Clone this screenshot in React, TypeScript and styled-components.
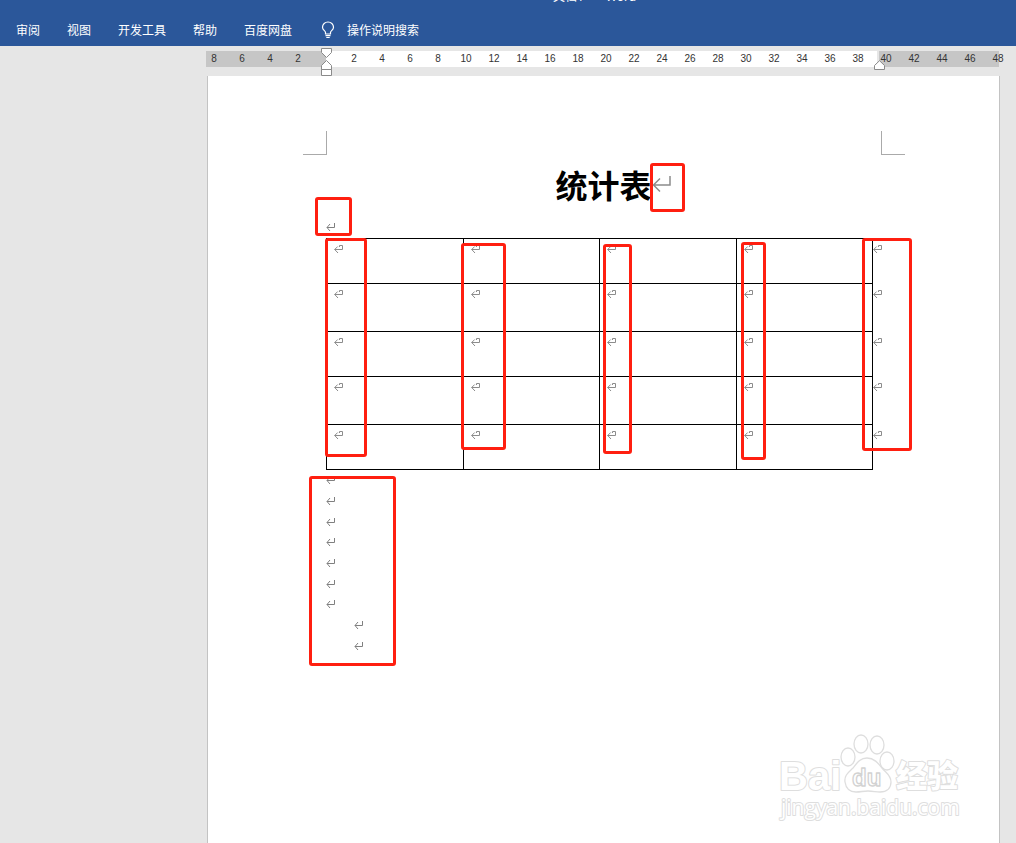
import React from "react";
import styled, { createGlobalStyle } from "styled-components";

const GlobalStyle = createGlobalStyle`
  * { box-sizing: border-box; }
  body {
    margin: 0;
    background: #e6e6e6;
    font-family: "Noto Sans", "Noto Sans CJK SC", sans-serif;
  }
  button { font: inherit; color: inherit; background: none; border: 0; padding: 0; cursor: pointer; }
`;

const Window = styled.div`
  min-height: 100vh;
  display: flex;
  flex-direction: column;
`;

const Header = styled.header`
  height: 46px;
  background: #2b579a;
  color: #fff;
  overflow: hidden;
  font-size: 12px;
  line-height: 18px;
`;

const TitleBar = styled.div`
  display: flex;
  gap: 9px;
  margin-top: -12px;
  padding-left: 553px;
  white-space: nowrap;
`;

const Tabs = styled.nav`
  display: flex;
  align-items: center;
  gap: 27px;
  height: 18px;
  margin-top: 15px;
  padding-left: 16px;
  white-space: nowrap;
  font-family: "Noto Sans CJK SC", sans-serif;
`;

const TellMe = styled.button`
  display: flex;
  align-items: center;
  gap: 12px;
  padding-left: 2px;
`;

const Workspace = styled.main`
  flex: 1;
  display: flex;
  flex-direction: column;
  padding: 5px 16px 0 207px;
`;

const Ruler = styled.div`
  position: relative;
  display: grid;
  grid-template-columns: 120px 1fr 120px;
  height: 16px;
  margin: 0 1px 9px -1px;
  font: 10px/16px "Liberation Sans", sans-serif;
  color: #333;
`;

const Segment = styled.div<{ $kind: "before" | "text" | "after" }>`
  display: flex;
  min-width: 0;
  background: ${(p) => (p.$kind === "text" ? "#fff" : "#c6c6c6")};
  justify-content: ${(p) => (p.$kind === "before" ? "flex-end" : "flex-start")};
  padding: ${(p) => (p.$kind === "after" ? "0" : "0 14px")};
  border-right: ${(p) => (p.$kind === "text" ? "2px solid #e6e6e6" : "0")};
`;

const Tick = styled.span<{ $first?: boolean }>`
  flex: 0 0 28px;
  text-align: center;
  margin-left: ${(p) => (p.$first ? "-7px" : "0")};
`;

const IndentMarkers = styled.svg`
  position: absolute;
  left: 115px;
  top: -3px;
`;

const RightMarker = styled.svg`
  position: absolute;
  right: 114px;
  top: 9px;
`;

const Page = styled.article`
  position: relative;
  flex: 1;
  min-height: 760px;
  padding: 55px 118px 0;
  background: #fff;
  border: solid #c3c3c3;
  border-width: 0 1px;
`;

const Margins = styled.div`
  display: flex;
  justify-content: space-between;
  margin: 0 -24px 0 -23px;
`;

const Corner = styled.span<{ $side: "left" | "right" }>`
  width: 24px;
  height: 24px;
  border-bottom: 1px solid #aaa;
  border-${(p) => (p.$side === "left" ? "right" : "left")}: 1px solid #aaa;
`;

const Title = styled.h1`
  display: flex;
  justify-content: center;
  align-items: center;
  margin: 5px 0 3px;
  font: 700 32px/48px "Noto Sans CJK SC", sans-serif;
  color: #000;
`;

const TitleMark = styled.svg`
  margin: 0 -19px 0 0;
`;

const Paragraph = styled.p<{ $indent?: boolean }>`
  display: flex;
  align-items: center;
  margin: 0;
  padding-left: ${(p) => (p.$indent ? "28px" : "0")};
`;

const Lead = styled.div`
  height: 27px;
  padding-top: 11px;
`;

const Table = styled.table`
  table-layout: fixed;
  border-collapse: collapse;
  width: calc(100% + 11px);
`;

const Cell = styled.td<{ $end?: boolean }>`
  width: ${(p) => (p.$end ? "19px" : "auto")};
  border: ${(p) => (p.$end ? "0" : "1px solid #000")};
  padding: ${(p) => (p.$end ? "5px 0 0" : "5px 0 0 7px")};
  vertical-align: top;
`;

const Row = styled.tr<{ $tall: boolean }>`
  height: ${(p) => (p.$tall ? "48px" : "45px")};
`;

const Paragraphs = styled.div`
  display: grid;
  grid-auto-rows: 1fr;
  height: 186px;
`;

const Block = styled.svg`
  display: block;
`;

const Highlight = styled.span<{ $x: number; $y: number; $w: number; $h: number }>`
  position: absolute;
  left: ${(p) => p.$x}px;
  top: ${(p) => p.$y}px;
  width: ${(p) => p.$w}px;
  height: ${(p) => p.$h}px;
  border: 3px solid #ff1f10;
  border-radius: 3px;
  pointer-events: none;
`;

const Watermark = styled.svg`
  position: absolute;
  right: 29px;
  top: 649px;
`;

const ParagraphMark = () => (
  <Block width="10" height="10" viewBox="0 0 10 10" fill="none" stroke="#808080" aria-hidden="true">
    <path d="M8.5 1V5.5H1M4 2L1 5.5L4 9" />
  </Block>
);

const CellMark = () => (
  <Block width="10" height="10" viewBox="0 0 10 10" fill="none" stroke="#8c8c8c" aria-hidden="true">
    <path d="M5.500 3V1.500H8.500V5.500H.7M3.700 2.500L.7 5.500L4 9" />
  </Block>
);

const Bulb = () => (
  <svg width="14" height="18" viewBox="0 0 14 18" fill="none" stroke="#fff" strokeWidth="1.2" aria-hidden="true">
    <path d="M4.5 13V11.500C4.500 10 1.500 9 1.500 6.200A5.500 5.200 0 0 1 12.500 6.200C12.500 9 9.500 10 9.500 11.500V13ZM4.500 14.700H9.500M5.300 16.500H8.700" />
  </svg>
);

const tabs = ["审阅", "视图", "开发工具", "帮助", "百度网盘"];
const before = [8, 6, 4, 2];
const inText = Array.from({ length: 19 }, (_, i) => (i + 1) * 2);
const after = [40, 42, 44, 46, 48];
const rows = [false, true, false, true, false];
const trailing = [false, false, false, false, false, false, false, true, true];

const highlights = [
  [442, 87, 35, 49],
  [107, 121, 37, 39],
  [117, 162, 42, 219],
  [253, 167, 45, 207],
  [395, 168, 29, 210],
  [533, 166, 25, 218],
  [654, 162, 50, 213],
  [101, 400, 87, 190],
];

export default function App() {
  return (
    <Window>
      <GlobalStyle />
      <Header>
        <TitleBar>
          <span>文档1</span>
          <span>-</span>
          <span>Word</span>
        </TitleBar>
        <Tabs>
          {tabs.map((t) => (
            <button key={t} type="button">{t}</button>
          ))}
          <TellMe type="button">
            <Bulb />
            <span>操作说明搜索</span>
          </TellMe>
        </Tabs>
      </Header>
      <Workspace>
        <Ruler>
          <Segment $kind="before">{before.map((n) => <Tick key={n}>{n}</Tick>)}</Segment>
          <Segment $kind="text">{inText.map((n) => <Tick key={n}>{n}</Tick>)}</Segment>
          <Segment $kind="after">
            {after.map((n, i) => <Tick key={n} $first={i === 0}>{n}</Tick>)}
          </Segment>
          <IndentMarkers width="11" height="28" viewBox="0 0 11 28" fill="#fff" stroke="#8a8a8a" aria-hidden="true">
            <path d="M.5 .5H10.5V4.500L5.500 9.500L.5 4.500ZM.5 21.500V17.500L5.500 12.500L10.500 17.500V21.500ZM.5 21.500H10.500V27.500H.5Z" />
          </IndentMarkers>
          <RightMarker width="11" height="10" viewBox="0 0 11 10" fill="#fff" stroke="#8a8a8a" aria-hidden="true">
            <path d="M.5 9.500V5.500L5.500 .7L10.500 5.500V9.500Z" />
          </RightMarker>
        </Ruler>
        <Page>
          <Margins>
            <Corner $side="left" />
            <Corner $side="right" />
          </Margins>
          <Title>
            统计表
            <TitleMark width="19" height="18" viewBox="0 0 19 18" fill="none" stroke="#8c8c8c" strokeWidth="1.500" aria-hidden="true">
              <path d="M18 1V10H1.500M8 3.500L1.500 10L8 16.500" />
            </TitleMark>
          </Title>
          <Lead>
            <Paragraph><ParagraphMark /></Paragraph>
          </Lead>
          <Table>
            <tbody>
              {rows.map((tall, r) => (
                <Row key={r} $tall={tall}>
                  {[0, 1, 2, 3].map((c) => (
                    <Cell key={c}><CellMark /></Cell>
                  ))}
                  <Cell $end><CellMark /></Cell>
                </Row>
              ))}
            </tbody>
          </Table>
          <Paragraphs>
            {trailing.map((indent, i) => (
              <Paragraph key={i} $indent={indent}><ParagraphMark /></Paragraph>
            ))}
          </Paragraphs>
          {highlights.map(([x, y, w, h]) => (
            <Highlight key={x} $x={x} $y={y} $w={w} $h={h} />
          ))}
          <Watermark width="200" height="105" viewBox="0 0 200 105" fill="#fff" stroke="#dedede" strokeLinejoin="round">
            <g style={{ paintOrder: "stroke" }} strokeWidth="2">
              <text x="9" y="65" fontFamily="Liberation Sans, sans-serif" fontWeight="700" fontSize="40">Bai</text>
              <text x="126" y="62" fontFamily="Noto Sans CJK SC, sans-serif" fontWeight="900" fontSize="31">经验</text>
              <text x="11" y="90" fontFamily="Open Sans, sans-serif" fontWeight="400" fontSize="21">jingyan.baidu.com</text>
            </g>
            <g strokeWidth="1.300">
              <ellipse cx="78" cy="32" rx="7" ry="9" />
              <ellipse cx="91" cy="19" rx="7" ry="9" />
              <ellipse cx="107" cy="20" rx="7" ry="9" />
              <ellipse cx="117" cy="36" rx="7" ry="9" />
              <path d="M97 33C90 33 87 38 83 43C79 47 74 50 75 57C76 64 80 67 86 67C91 67 93 66 98 66C103 66 106 67 110 67C117 67 121 63 121 57C121 50 116 48 112 43C108 38 104 33 97 33Z" />
              <text x="82" y="61" fontFamily="Liberation Sans, sans-serif" fontWeight="700" fontSize="24" stroke="#d2d2d2">du</text>
            </g>
          </Watermark>
        </Page>
      </Workspace>
    </Window>
  );
}
